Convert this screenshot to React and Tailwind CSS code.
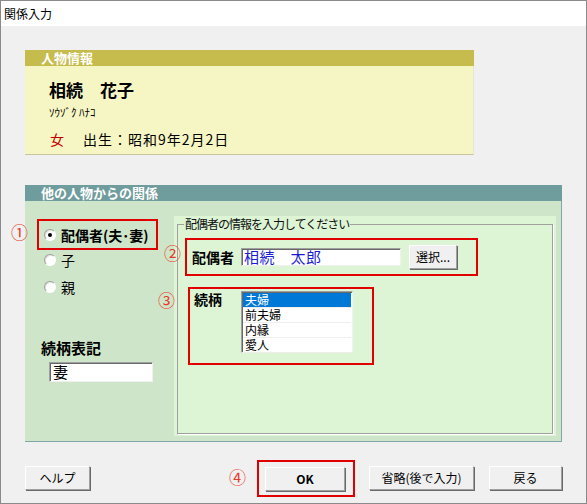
import React from "react";

const font = "font-['Noto_Sans_CJK_JP','Noto_Sans',sans-serif]";

const Radio = ({ checked }) => (
  <span className="w-[12px] h-[12px] rounded-full bg-white border border-t-[#a0a0a0] border-l-[#a0a0a0] border-r-white border-b-white shadow-[inset_1px_1px_0_#e3e3e3] flex items-center justify-center shrink-0">
    {checked && <span className="w-[4px] h-[4px] rounded-full bg-black" />}
  </span>
);

const Button = ({ children, className = "" }) => (
  <button
    className={`h-[24px] bg-[#f0f0f0] border border-t-white border-l-white border-r-[#a0a0a0] border-b-[#a0a0a0] shadow-[1px_1px_0_#696969] text-[12px] text-black flex items-center justify-center ${className}`}
  >
    {children}
  </button>
);

const Mark = ({ children, className = "" }) => (
  <span className={`absolute text-[17px] leading-[18px] text-[#e83828] ${className}`}>
    {children}
  </span>
);

const Sunken = ({ children, className = "" }) => (
  <div
    className={`bg-white border border-t-[#a0a0a0] border-l-[#a0a0a0] border-r-[#f0f0f0] border-b-[#f0f0f0] shadow-[inset_1px_1px_0_#696969] ${className}`}
  >
    {children}
  </div>
);

const App = () => {
  const items = ["夫婦", "前夫婦", "内縁", "愛人"];

  return (
    <div className={`w-[587px] h-[504px] border border-[#8a8a8a] bg-[#f0f0f0] flex flex-col text-black ${font}`}>
      <div className="h-[25px] bg-white flex items-center pl-[3px] text-[12px]">関係入力</div>

      <div className="relative flex-1 pl-[24px] pt-[24px]">
        {/* 人物情報 */}
        <section className="w-[449px] h-[105px] flex flex-col">
          <div className="h-[16px] bg-[#c6bc4e] text-white font-bold text-[13px] leading-[16px] pl-[16px]">
            人物情報
          </div>
          <div className="flex-1 bg-[#f6f6c4] border-r border-b border-r-[#e6e6d8] border-b-[#c9c49a] pl-[24px] pt-[14px]">
            <p className="text-[17px] leading-[20px] font-bold">相続　花子</p>
            <p className="text-[11px] leading-[14px] mt-[5px]">ｿｳｿﾞｸ ﾊﾅｺ</p>
            <p className="text-[14px] leading-[18px] mt-[11px] flex">
              <span className="text-[#c00000] ml-[1px] w-[33px]">女</span>
              <span className="tracking-[1px]">出生：昭和9年2月2日</span>
            </p>
          </div>
        </section>

        {/* 他の人物からの関係 */}
        <section className="relative w-[537px] h-[257px] mt-[30px] flex flex-col">
          <div className="h-[16px] bg-[#6f9c9c] text-white font-bold text-[13px] leading-[16px] pl-[16px]">
            他の人物からの関係
          </div>
          <div className="flex-1 flex bg-[#cfe5c9] border-r border-b border-[#7fa9a6]">
            <div className="w-[149px] pt-[18px] pl-[12px] flex flex-col">
              <div className="w-[121px] h-[31px] border-2 border-[#e00000] flex items-center gap-[5px] pl-[5px]">
                <Radio checked />
                <span className="text-[14px] font-bold leading-[16px]">配偶者(夫･妻)</span>
              </div>
              <div className="flex items-center gap-[5px] pl-[7px] mt-[0px] h-[20px] text-[14px]">
                <Radio />
                <span>子</span>
              </div>
              <div className="flex items-center gap-[5px] pl-[7px] mt-[7px] h-[20px] text-[14px]">
                <Radio />
                <span>親</span>
              </div>
              <p className="text-[15px] font-bold leading-[18px] mt-[42px] ml-[4px]">続柄表記</p>
              <Sunken className="w-[104px] h-[20px] ml-[12px] mt-[5px] px-[3px] text-[15px] leading-[17px]">妻</Sunken>
            </div>

            <div className="w-[382px] h-[220px] mt-[15px] bg-[#ddf5d5] pl-[3px]">
              <fieldset className="w-[376px] h-[218px] border border-[#a0a0a0] shadow-[1px_1px_0_#ffffff]">
                <legend className="ml-[6px] px-[1px] text-[12px] leading-[16px] tracking-[-1px] text-[#111]">
                  配偶者の情報を入力してください
                </legend>
                <div className="ml-[7px] mt-[6px] w-[293px] h-[38px] border-2 border-[#e00000] flex items-center pl-[5px]">
                  <span className="text-[14px] font-bold w-[49px]">配偶者</span>
                  <Sunken className="w-[160px] h-[18px] px-[2px] text-[15px] leading-[16px] text-[#1c1ccf] tracking-[0.5px]">
                    相続　太郎
                  </Sunken>
                  <Button className="w-[48px] ml-[8px]">選択...</Button>
                </div>
                <div className="ml-[10px] mt-[11px] w-[186px] h-[78px] border-2 border-[#e00000] flex items-start pt-[2px] pl-[2px]">
                  <span className="text-[14px] font-bold w-[49px] leading-[16px] pl-[2px]">続柄</span>
                  <Sunken className="w-[112px] h-[62px] p-[1px]">
                    {items.map((it, i) => (
                      <div
                        key={it}
                        className={`h-[15px] text-[12px] leading-[14px] pl-[2px] border-b border-[#eeeeee] ${
                          i === 0 ? "bg-[#0078d7] text-white" : "text-black"
                        }`}
                      >
                        {it}
                      </div>
                    ))}
                  </Sunken>
                </div>
              </fieldset>
            </div>
          </div>

          <Mark className="left-[-14px] top-[38px]">①</Mark>
          <Mark className="left-[139px] top-[59px]">②</Mark>
          <Mark className="left-[133px] top-[106px]">③</Mark>
        </section>

        {/* ボタン */}
        <div className="relative mt-[24px] h-[24px] flex items-center w-[537px]">
          <Button className="w-[65px]">ヘルプ</Button>
          <Mark className="left-[204px] top-[2px]">④</Mark>
          <div className="ml-[167px] border-2 border-[#e00000] w-[98px] h-[37px] -mt-[6px] -mb-[7px] flex items-center pl-[6px]">
            <Button className="w-[80px] font-bold">OK</Button>
          </div>
          <Button className="w-[105px] ml-[14px]">省略(後で入力)</Button>
          <Button className="w-[73px] ml-[15px]">戻る</Button>
        </div>
      </div>
    </div>
  );
};

export default App;
